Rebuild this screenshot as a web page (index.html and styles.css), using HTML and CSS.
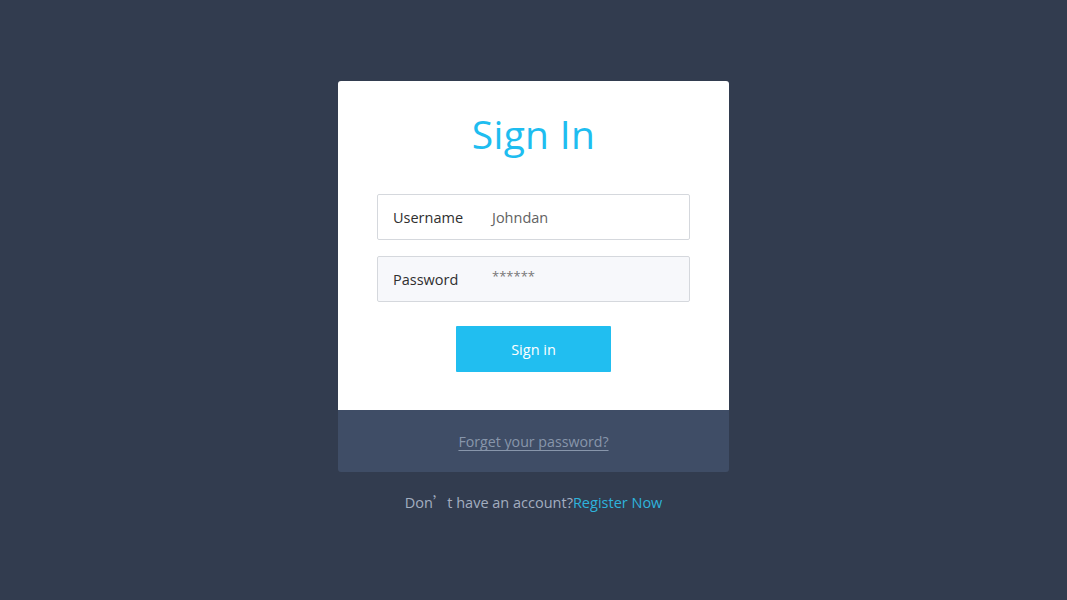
FILE: index.html
```html
<!DOCTYPE html>
<html>
<head>
<meta charset="utf-8">
<link rel="stylesheet" href="styles.css">
</head>
<body>
<main class="page">
  <section class="card">
    <div class="card-body">
      <h1 class="title">Sign In</h1>
      <div class="field">
        <span class="label">Username</span>
        <span class="value">Johndan</span>
      </div>
      <div class="field field-alt">
        <span class="label">Password</span>
        <span class="value stars">******</span>
      </div>
      <button class="btn">Sign in</button>
    </div>
    <div class="card-foot">
      <a class="forgot">Forget your password?</a>
    </div>
  </section>
  <p class="register">Don<span class="cjk">’</span>t have an account?<a class="reg-link">Register Now</a></p>
</main>
</body>
</html>
```

FILE: styles.css
```css
* { box-sizing: border-box; }
html, body { margin: 0; height: 100%; }
body {
  background: #323c4f;
  font-family: "Open Sans", "Noto Sans CJK SC", sans-serif;
}
.page {
  display: flex;
  flex-direction: column;
  align-items: center;
  padding-top: 81px;
}
.card {
  width: 391px;
  border-radius: 3px;
  overflow: hidden;
}
.card-body {
  background: #fff;
  padding: 26px 39px 38px;
  display: flex;
  flex-direction: column;
  align-items: center;
}
.title {
  margin: 0 0 33px;
  font-weight: 400;
  font-size: 39px;
  line-height: 54px;
  color: #1ebdf0;
  letter-spacing: 0.3px;
}
.field {
  width: 313px;
  height: 46px;
  border: 1px solid #d5d8dd;
  border-radius: 2px;
  display: flex;
  align-items: center;
  padding-left: 15px;
  margin-bottom: 16px;
  font-size: 14.5px;
}
.field-alt { background: #f7f8fb; margin-bottom: 24px; }
.label { color: #2f2f2f; width: 99px; }
.value { color: #626262; }
.stars { font-size: 13px; position: relative; top: -3px; color: #777; }
.btn {
  width: 155px;
  height: 46px;
  border: none;
  border-radius: 1px;
  background: #21bef0;
  color: #fff;
  font-family: inherit;
  font-size: 14.5px;
  padding: 0;
}
.card-foot {
  background: #3f4d66;
  height: 62px;
  display: flex;
  align-items: center;
  justify-content: center;
}
.forgot {
  color: #8896ab;
  font-size: 14.2px;
  text-decoration: underline;
  text-decoration-skip-ink: none;
  text-underline-offset: 3px;
}
.register {
  margin: 19px 0 0;
  color: #a3aec0;
  font-size: 14.5px;
}
.cjk { font-family: "Noto Sans CJK SC", sans-serif; }
.reg-link { color: #2eb3dc; }
```
